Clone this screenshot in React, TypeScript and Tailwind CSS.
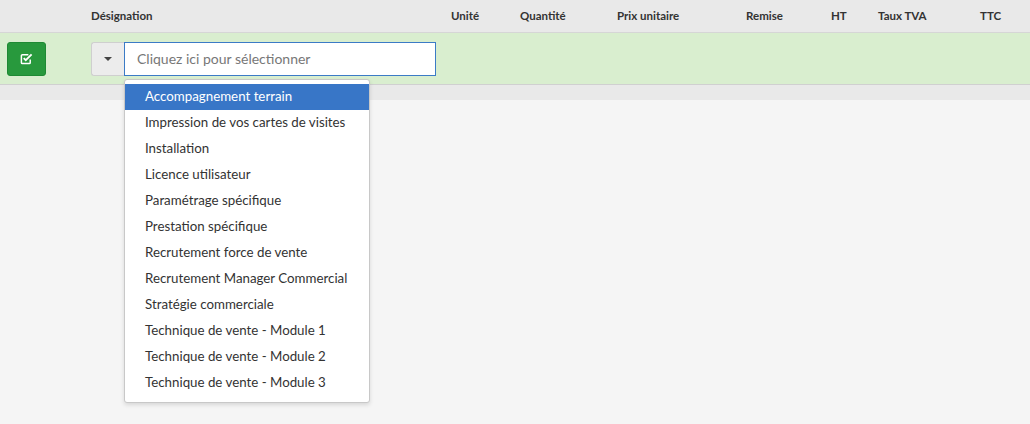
import React from "react";

const items = [
  "Accompagnement terrain",
  "Impression de vos cartes de visites",
  "Installation",
  "Licence utilisateur",
  "Paramétrage spécifique",
  "Prestation spécifique",
  "Recrutement force de vente",
  "Recrutement Manager Commercial",
  "Stratégie commerciale",
  "Technique de vente - Module 1",
  "Technique de vente - Module 2",
  "Technique de vente - Module 3",
];

export default function App() {
  return (
    <div
      className="w-[1030px] h-[424px] bg-[#f5f5f5] overflow-hidden text-[#333]"
      style={{ fontFamily: "Lato, 'Open Sans', sans-serif" }}
    >
      <div className="flex h-[33px] items-center bg-[#e9e9e9] border-b border-[#d6d6d6] text-[11.5px] font-bold text-[#333]">
        <div className="w-[91px]" />
        <div className="w-[360px]">Désignation</div>
        <div className="w-[69px]">Unité</div>
        <div className="w-[97px]">Quantité</div>
        <div className="w-[129px]">Prix unitaire</div>
        <div className="w-[85px]">Remise</div>
        <div className="w-[47px]">HT</div>
        <div className="w-[102px]">Taux TVA</div>
        <div>TTC</div>
      </div>
      <div className="flex h-[52px] items-center bg-[#d9eecf] border-b border-[#d0d0d0]">
        <div className="w-[91px] pl-[7px]">
          <button className="flex h-[34px] w-[39px] items-center justify-center rounded-[3px] border border-[#1f8a34] bg-[#28993d]">
            <svg width="13" height="13" viewBox="0 0 14 14" fill="none">
              <path d="M11 8v3.5a1 1 0 0 1-1 1H2.5a1 1 0 0 1-1-1V4a1 1 0 0 1 1-1H9" stroke="white" strokeWidth="1.6" />
              <path d="M4 6.5l2.2 2.2L12.5 2.5" stroke="white" strokeWidth="2" />
            </svg>
          </button>
        </div>
        <div className="relative flex">
          <button className="flex h-[34px] w-[33px] items-center justify-center rounded-l-[3px] border border-r-0 border-[#cfcfcf] bg-[#ececec]">
            <span className="block h-0 w-0 border-x-[4px] border-t-[4px] border-x-transparent border-t-[#444]" />
          </button>
          <div className="flex h-[34px] w-[312px] items-center border border-[#3b7bc6] bg-white pl-[12px] text-[14px] text-[#777]">
            Cliquez ici pour sélectionner
          </div>
          <div className="absolute left-[33px] top-[37px] w-[246px] rounded-[3px] border border-[#c8c8c8] bg-white pt-[4px] pb-[6px] shadow-[0_2px_4px_rgba(0,0,0,0.12)]">
            {items.map((it, i) => (
              <div
                key={it}
                className={
                  "flex h-[26px] items-center pl-[20px] text-[13.3px] " +
                  (i === 0 ? "bg-[#3876c7] text-white" : "text-[#333]")
                }
              >
                {it}
              </div>
            ))}
          </div>
        </div>
      </div>
      <div className="h-[15px] bg-[#e9e9e9]" />
    </div>
  );
}
